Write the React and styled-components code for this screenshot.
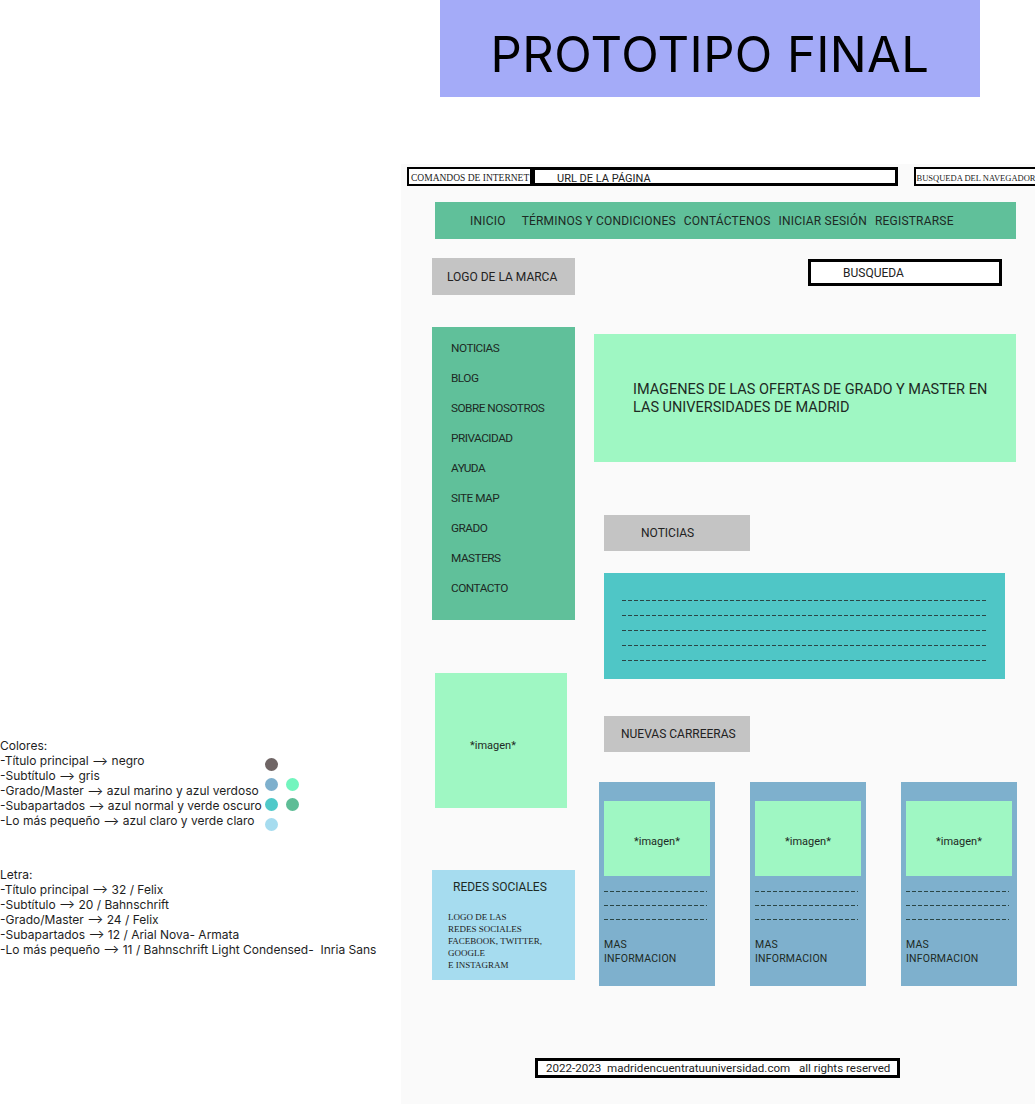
import React from 'react';
import styled, { createGlobalStyle } from 'styled-components';

const NAV_ITEMS = ['INICIO', 'TÉRMINOS Y CONDICIONES', 'CONTÁCTENOS', 'INICIAR SESIÓN', 'REGISTRARSE'];
const SIDE_ITEMS = ['NOTICIAS', 'BLOG', 'SOBRE NOSOTROS', 'PRIVACIDAD', 'AYUDA', 'SITE MAP', 'GRADO', 'MASTERS', 'CONTACTO'];

const COLOR_LINES = [
  'Colores:',
  '-Título principal ⟶ negro',
  '-Subtítulo ⟶ gris',
  '-Grado/Master ⟶ azul marino y azul verdoso',
  '-Subapartados ⟶ azul normal y verde oscuro',
  '-Lo más pequeño ⟶ azul claro y verde claro',
];

const FONT_LINES = [
  'Letra:',
  '-Título principal ⟶ 32 / Felix',
  '-Subtítulo ⟶ 20 / Bahnschrift',
  '-Grado/Master ⟶ 24 / Felix',
  '-Subapartados ⟶ 12 / Arial Nova- Armata',
  '-Lo más pequeño ⟶ 11 / Bahnschrift Light Condensed-  Inria Sans',
];

// null = empty slot in the swatch grid
const SWATCHES = ['#6f6565', null, '#7eb0cd', '#72f5be', '#4fc9c9', '#5ebd96', '#a6dcef', null];

const GlobalStyle = createGlobalStyle`
  body {
    margin: 0;
    background: #ffffff;
    font-family: Roboto, "Noto Sans", sans-serif;
    color: #1a1a1a;
  }
`;

const Page = styled.div`
  display: flex;
  width: 1035px;
  height: 1104px;
  overflow: hidden;
`;

const Legend = styled.aside`
  width: 401px;
  flex-shrink: 0;
  padding-top: 738px;
  font-family: Inter, "Noto Sans", sans-serif;
  font-size: 12px;
  line-height: 15px;
  color: #1e1e1e;
`;

const LegendBlock = styled.div`
  display: flex;
  margin-top: ${p => p.$offset || 0}px;
  white-space: pre;
`;

const LegendText = styled.div`
  width: ${p => (p.$narrow ? '265px' : 'auto')};
`;

const Swatches = styled.div`
  display: grid;
  grid-template-columns: 13px 13px;
  grid-auto-rows: 13px;
  column-gap: 8px;
  row-gap: 7px;
  margin-top: 20px;
`;

const Swatch = styled.span`
  border-radius: 50%;
  background: ${p => p.$color || 'transparent'};
`;

const Main = styled.main`
  width: 634px;
  min-width: 0;
  flex-shrink: 0;
  display: flex;
  flex-direction: column;
`;

const TitleBox = styled.header`
  width: 540px;
  height: 97px;
  margin-left: 39px;
  box-sizing: border-box;
  padding-top: 12px;
  background: #a4abf8;
  display: flex;
  align-items: center;
  justify-content: center;
  font-family: Inter, "Noto Sans", sans-serif;
  font-size: 49px;
  letter-spacing: 0.4px;
  color: #000;
`;

const Frame = styled.div`
  margin-top: 67px;
  flex: 1;
  min-width: 0;
  background: #fafafa;
  overflow: hidden;
  display: flex;
  flex-direction: column;
`;

const BrowserBar = styled.div`
  display: flex;
  align-items: flex-start;
  margin-top: 3px;
  padding-left: 6px;
  overflow: hidden;
`;

const BarBox = styled.div`
  height: 19px;
  width: ${p => p.$w}px;
  margin-left: ${p => p.$ml || 0}px;
  flex-shrink: 0;
  box-sizing: border-box;
  border: ${p => p.$b || 2}px solid #000;
  background: #fff;
  display: flex;
  align-items: ${p => (p.$low ? 'flex-end' : 'center')};
  justify-content: ${p => (p.$center ? 'center' : 'flex-start')};
  padding-left: ${p => p.$pl || 0}px;
  padding-top: ${p => (p.$serif ? 2 : 0)}px;
  white-space: nowrap;
  overflow: hidden;
  font-family: ${p => (p.$serif ? '"Liberation Serif", serif' : 'Roboto, sans-serif')};
  font-size: ${p => p.$fs || 9}px;
  line-height: ${p => (p.$low ? 8 : 12)}px;
  color: #222;
`;

const NavBar = styled.nav`
  margin: 16px 19px 0 34px;
  height: 37px;
  background: #60c09a;
  display: flex;
  align-items: center;
  gap: 8px;
  padding-left: 35px;
`;

const NavItem = styled.span`
  font-size: 12px;
  letter-spacing: 0.2px;
  color: #1d2a24;
  margin-right: ${p => (p.$wide ? 8 : 0)}px;
`;

const BrandRow = styled.div`
  display: flex;
  justify-content: space-between;
  align-items: flex-start;
  margin-top: 19px;
  padding: 0 33px 0 31px;
`;

const GrayLabel = styled.div`
  width: ${p => p.$w || 146}px;
  height: ${p => p.$h || 36}px;
  margin-left: ${p => p.$ml || 0}px;
  margin-top: ${p => p.$mt || 0}px;
  padding-left: ${p => p.$pl}px;
  box-sizing: border-box;
  background: #c4c4c4;
  display: flex;
  align-items: center;
  font-size: 12px;
  color: #222;
`;

const SearchBox = styled.div`
  width: 194px;
  height: 27px;
  margin-top: 1px;
  box-sizing: border-box;
  border: 3px solid #000;
  background: #fff;
  display: flex;
  align-items: center;
  padding-left: 32px;
  font-size: 12px;
  color: #222;
`;

const Body = styled.div`
  display: flex;
  align-items: flex-start;
  margin-top: 32px;
  padding-left: 31px;
`;

const LeftCol = styled.div`
  width: 143px;
  display: flex;
  flex-direction: column;
`;

const Sidebar = styled.ul`
  list-style: none;
  margin: 0;
  height: 293px;
  box-sizing: border-box;
  padding: 6px 0 0 19px;
  background: #60c09a;
`;

const SideItem = styled.li`
  font-size: 11.8px;
  letter-spacing: -0.5px;
  line-height: 30px;
  color: #1d2a24;
`;

const ImageBox = styled.div`
  width: ${p => p.$w}px;
  height: ${p => p.$h}px;
  margin: ${p => p.$m || 0};
  background: #9ff7c3;
  display: flex;
  align-items: center;
  justify-content: ${p => (p.$center ? 'center' : 'flex-start')};
  padding-left: ${p => p.$pl || 0}px;
  padding-top: ${p => p.$pt || 0}px;
  box-sizing: border-box;
  font-size: 11px;
  color: #1d2a24;
`;

const SocialBox = styled.div`
  margin-top: 62px;
  height: 110px;
  box-sizing: border-box;
  background: #a6dcef;
  padding: 9px 0 0 16px;
`;

const SocialTitle = styled.div`
  font-size: 12px;
  line-height: 16px;
  padding-left: 5px;
  color: #1d2a24;
`;

const SocialText = styled.div`
  margin-top: 16px;
  font-family: "Liberation Serif", serif;
  font-size: 9px;
  line-height: 12px;
  color: #222;
`;

const RightCol = styled.div`
  margin-left: 19px;
  width: 422px;
  display: flex;
  flex-direction: column;
  align-items: flex-start;
`;

const Hero = styled.div`
  width: 422px;
  height: 128px;
  margin-top: 7px;
  box-sizing: border-box;
  background: #9ff7c3;
  padding: 47px 10px 0 39px;
  font-size: 14.5px;
  line-height: 18px;
  color: #1d2a24;
`;

const NewsBox = styled.div`
  margin: 22px 0 0 10px;
  width: 401px;
  height: 106px;
  box-sizing: border-box;
  background: #4fc6c6;
  padding: 20px 0 0 18px;
  display: flex;
  flex-direction: column;
`;

const Dashes = styled.div`
  width: ${p => p.$w}px;
  height: ${p => p.$step}px;
  flex-shrink: 0;
  background: repeating-linear-gradient(
      90deg,
      #2a4646 0 4px,
      transparent 4px 6px
    )
    0 50% / 100% 1px no-repeat;
`;

const Cards = styled.div`
  display: flex;
  gap: 35px;
  margin: 30px 0 0 5px;
`;

const Card = styled.div`
  width: 116px;
  height: 204px;
  box-sizing: border-box;
  background: #7eb0cd;
  padding: 19px 5px 0 5px;
  display: flex;
  flex-direction: column;
`;

const CardLines = styled.div`
  margin-top: 8px;
  display: flex;
  flex-direction: column;
`;

const MoreInfo = styled.div`
  margin-top: 12px;
  font-size: 10.5px;
  line-height: 14px;
  letter-spacing: 0.2px;
  color: #1d2a24;
`;

const Footer = styled.footer`
  margin: 72px 0 0 134px;
  width: 365px;
  height: 20px;
  box-sizing: border-box;
  border: 3px solid #000;
  background: #fff;
  display: flex;
  align-items: center;
  padding-left: 8px;
  font-size: 11.6px;
  color: #222;
  white-space: pre;
`;

export default function App() {
  return (
    <>
      <GlobalStyle />
      <Page>
        <Legend>
          <LegendBlock>
            <LegendText $narrow>
              {COLOR_LINES.map(l => (
                <div key={l}>{l}</div>
              ))}
            </LegendText>
            <Swatches>
              {SWATCHES.map((c, i) => (
                <Swatch key={i} $color={c} />
              ))}
            </Swatches>
          </LegendBlock>
          <LegendBlock $offset={36}>
            <LegendText>
              {FONT_LINES.map(l => (
                <div key={l}>{l}</div>
              ))}
            </LegendText>
          </LegendBlock>
        </Legend>

        <Main>
          <TitleBox>PROTOTIPO FINAL</TitleBox>
          <Frame>
            <BrowserBar>
              <BarBox $w={125} $serif $fs={9.5} $pl={2}>COMANDOS DE INTERNET</BarBox>
              <BarBox $w={366} $b={3} $pl={22} $fs={11} $low>URL DE LA PÁGINA</BarBox>
              <BarBox $w={124} $ml={16} $serif $fs={8.5} $center>BUSQUEDA DEL NAVEGADOR</BarBox>
            </BrowserBar>

            <NavBar>
              {NAV_ITEMS.map((item, i) => (
                <NavItem key={item} $wide={i === 0}>{item}</NavItem>
              ))}
            </NavBar>

            <BrandRow>
              <GrayLabel $w={143} $h={37} $pl={15}>LOGO DE LA MARCA</GrayLabel>
              <SearchBox>BUSQUEDA</SearchBox>
            </BrandRow>

            <Body>
              <LeftCol>
                <Sidebar>
                  {SIDE_ITEMS.map(item => (
                    <SideItem key={item}>{item}</SideItem>
                  ))}
                </Sidebar>
                <ImageBox $w={132} $h={135} $m="53px 0 0 3px" $pl={35} $pt={10}>*imagen*</ImageBox>
                <SocialBox>
                  <SocialTitle>REDES SOCIALES</SocialTitle>
                  <SocialText>
                    LOGO DE LAS<br />
                    REDES SOCIALES<br />
                    FACEBOOK, TWITTER,<br />
                    GOOGLE<br />
                    E INSTAGRAM
                  </SocialText>
                </SocialBox>
              </LeftCol>

              <RightCol>
                <Hero>
                  IMAGENES DE LAS OFERTAS DE GRADO Y MASTER EN
                  <br />
                  LAS UNIVERSIDADES DE MADRID
                </Hero>
                <GrayLabel $ml={10} $mt={53} $pl={37}>NOTICIAS</GrayLabel>
                <NewsBox>
                  {[0, 1, 2, 3, 4].map(i => (
                    <Dashes key={i} $w={365} $step={15} />
                  ))}
                </NewsBox>
                <GrayLabel $ml={10} $mt={37} $pl={17}>NUEVAS CARREERAS</GrayLabel>
                <Cards>
                  {[0, 1, 2].map(i => (
                    <Card key={i}>
                      <ImageBox $w={106} $h={75} $center $pt={5}>*imagen*</ImageBox>
                      <CardLines>
                        {[0, 1, 2].map(j => (
                          <Dashes key={j} $w={103} $step={14} />
                        ))}
                      </CardLines>
                      <MoreInfo>
                        MAS
                        <br />
                        INFORMACION
                      </MoreInfo>
                    </Card>
                  ))}
                </Cards>
              </RightCol>
            </Body>

            <Footer>{'2022-2023  madridencuentratuuniversidad.com   all rights reserved'}</Footer>
          </Frame>
        </Main>
      </Page>
    </>
  );
}
